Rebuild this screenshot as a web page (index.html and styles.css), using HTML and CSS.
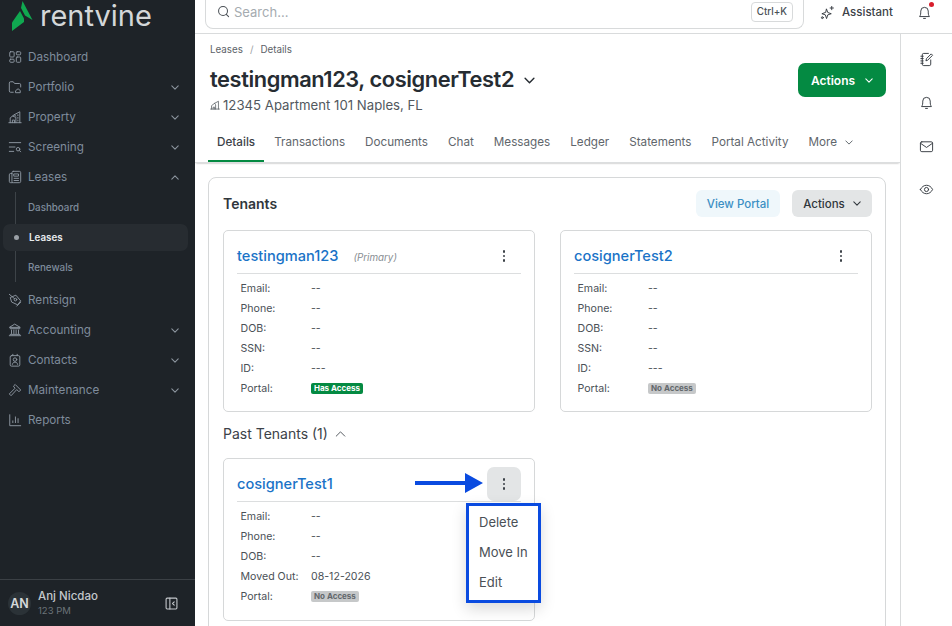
FILE: index.html
```html
<!DOCTYPE html>
<html lang="en">
<head>
    <meta charset="UTF-8">
    <title>Lease Details</title>
    <link rel="stylesheet" href="styles.css">
</head>
<body>
<div class="app">
    <aside class="sidebar">
        <div class="logo">
            <svg width="22" height="31" viewBox="0 0 22 31"><path d="M10.500 1 20.500 20 13 15.500 9 8z" fill="#10a850"/><path d="M8 11 12 18.500 12 22 0 31 0 22.500z" fill="#10a850"/></svg>
            <span class="logo-text">rentvine</span>
        </div>
        <nav class="nav">
            <div class="nav-item"><svg class="nav-icon" viewBox="0 0 16 16"><rect x="2" y="2" width="5" height="6" rx="1"/><rect x="9.500" y="2" width="5" height="3.500" rx="1"/><rect x="2" y="10.500" width="5" height="3.500" rx="1"/><rect x="9.500" y="8" width="5" height="6" rx="1"/></svg><span>Dashboard</span></div>
            <div class="nav-item"><svg class="nav-icon" viewBox="0 0 16 16"><path d="M6 14H3a1.500 1.500 0 0 1-1.500-1.500v-9A1.500 1.500 0 0 1 3 2h3l1.500 2H13a1.500 1.500 0 0 1 1.500 1.500V8"/><path d="M9 12l2.500-2 2.500 2v2.500H9z"/></svg><span>Portfolio</span><svg class="chev" viewBox="0 0 10 6"><path d="M1 1l4 4 4-4"/></svg></div>
            <div class="nav-item"><svg class="nav-icon" viewBox="0 0 16 16"><path d="M1 14.500h14M2.500 14.500V9L7 5.500l2 1.500M13.500 14.500V2L7 5.500M9 14.500V8.500L5.500 7M5 14.500v-3h2.500v3M11.300 5.500v1M11.300 8.500v1M11.300 11.500v1"/></svg><span>Property</span><svg class="chev" viewBox="0 0 10 6"><path d="M1 1l4 4 4-4"/></svg></div>
            <div class="nav-item"><svg class="nav-icon" viewBox="0 0 16 16"><path d="M1.500 3h13M1.500 8h6.500M1.500 13h5"/><circle cx="11.500" cy="10.500" r="2"/><path d="M13 12l1.500 1.500"/></svg><span>Screening</span><svg class="chev" viewBox="0 0 10 6"><path d="M1 1l4 4 4-4"/></svg></div>
            <div class="nav-item"><svg class="nav-icon" viewBox="0 0 16 16"><rect x="4.500" y="1.500" width="10" height="13" rx="1.500"/><path d="M4.500 4H3a1.500 1.500 0 0 0-1.500 1.500V13A1.500 1.500 0 0 0 3 14.500h2M7 4.500h5V7H7zM7 9.500h5M7 12h5"/></svg><span>Leases</span><svg class="chev" viewBox="0 0 10 6"><path d="M1 5l4-4 4 4"/></svg></div>
            <div class="subnav">
                <div class="sub-item">Dashboard</div>
                <div class="sub-item active">Leases</div>
                <div class="sub-item">Renewals</div>
            </div>
            <div class="nav-item nav-after"><svg class="nav-icon" viewBox="0 0 16 16"><path d="M3 5 9 2.500 14.500 9 11 13.500 4.500 10.500z"/><circle cx="8.500" cy="7.500" r="1.500"/><path d="M1.500 1.500 7.500 6.500M10 15l4.500-4.500"/></svg><span>Rentsign</span></div>
            <div class="nav-item"><svg class="nav-icon" viewBox="0 0 16 16"><path d="M8 1.500 14 5H2zM2.500 6.500h11M4 8v4M6.700 8v4M9.300 8v4M12 8v4M2.500 13h11M1.500 14.500h13"/></svg><span>Accounting</span><svg class="chev" viewBox="0 0 10 6"><path d="M1 1l4 4 4-4"/></svg></div>
            <div class="nav-item"><svg class="nav-icon" viewBox="0 0 16 16"><rect x="2.500" y="3" width="11" height="12" rx="1.500"/><path d="M5.500 1.500V3M10.500 1.500V3"/><circle cx="8" cy="7.500" r="2"/><path d="M5 13c.4-2 1.500-2.500 3-2.500s2.600.5 3 2.500"/></svg><span>Contacts</span><svg class="chev" viewBox="0 0 10 6"><path d="M1 1l4 4 4-4"/></svg></div>
            <div class="nav-item"><svg class="nav-icon" viewBox="0 0 16 16"><path d="M8.500 2 14.500 8 12.500 10 10 7.500 3.500 14.500 1.500 12.500 8 6 6.500 4z"/></svg><span>Maintenance</span><svg class="chev" viewBox="0 0 10 6"><path d="M1 1l4 4 4-4"/></svg></div>
            <div class="nav-item"><svg class="nav-icon" viewBox="0 0 16 16"><path d="M2 2v12.500h12.500M5.500 11V9M8.500 11V4.500M11.500 11V6.500"/></svg><span>Reports</span></div>
        </nav>
        <div class="user">
            <div class="avatar">AN</div>
            <div class="user-info">
                <div class="user-name">Anj Nicdao</div>
                <div class="user-org">123 PM</div>
            </div>
            <svg class="collapse" viewBox="0 0 12 12"><rect x="1" y="1" width="10" height="10" rx="1"/><path d="M4.500 1v10M8.500 4.500 7 6l1.500 1.500"/></svg>
        </div>
    </aside>

    <div class="main">
        <header class="topbar">
            <div class="search">
                <svg class="search-icon" viewBox="0 0 14 14"><circle cx="6.500" cy="6.500" r="4.800"/><path d="M10 10l2.500 2.500"/></svg>
                <span class="search-text">Search...</span>
                <span class="kbd">Ctrl+K</span>
            </div>
            <div class="assistant">
                <svg class="top-icon" viewBox="0 0 16 16"><path d="M7 4.500 8.300 8 12 9.300 8.300 10.500 7 14.500 5.700 10.500 2 9.300 5.700 8z"/><path d="M12.500 1.500v3.500M10.800 3.200h3.500"/><circle cx="2.500" cy="13.500" r="1"/></svg>
                <span>Assistant</span>
            </div>
            <div class="top-bell">
                <svg class="top-icon" viewBox="0 0 16 16"><path d="M3 12c1-1.500 1-2.500 1-5.500a4 4 0 0 1 8 0c0 3 0 4 1 5.500zM7 14.300h2"/></svg>
                <span class="dot"></span>
            </div>
        </header>

        <div class="body">
            <div class="content">
                <div class="page-head">
                    <div class="crumbs"><span>Leases</span><span class="crumb-sep">/</span><span>Details</span></div>
                    <div class="title-row">
                        <div>
                            <h1 class="title">testingman123, cosignerTest2 <svg class="title-chev" viewBox="0 0 10 6"><path d="M1 1l4 4 4-4"/></svg></h1>
                            <div class="address"><svg class="addr-icon" viewBox="0 0 16 16"><path d="M1 14.500h14M2.500 14.500V9L7 5.500l2 1.500M13.500 14.500V2L7 5.500M9 14.500V8.500M5 14.500v-3h2.500v3"/></svg>12345 Apartment 101 Naples, FL</div>
                        </div>
                        <button class="btn-green">Actions <svg class="btn-chev" viewBox="0 0 10 6"><path d="M1 1l4 4 4-4"/></svg></button>
                    </div>
                </div>
                <div class="tabs">
                    <div class="tab active">Details</div>
                    <div class="tab">Transactions</div>
                    <div class="tab">Documents</div>
                    <div class="tab">Chat</div>
                    <div class="tab">Messages</div>
                    <div class="tab">Ledger</div>
                    <div class="tab">Statements</div>
                    <div class="tab">Portal Activity</div>
                    <div class="tab">More <svg class="tab-chev" viewBox="0 0 10 6"><path d="M1 1l4 4 4-4"/></svg></div>
                </div>

                <section class="panel">
                    <div class="panel-head">
                        <h2 class="panel-title">Tenants</h2>
                        <button class="btn-light">View Portal</button>
                        <button class="btn-grey">Actions <svg class="btn-chev" viewBox="0 0 10 6"><path d="M1 1l4 4 4-4"/></svg></button>
                    </div>
                    <div class="tenant-grid">
                        <div class="tenant">
                            <div class="tenant-head">
                                <a class="tenant-name">testingman123</a><span class="primary">(Primary)</span>
                                <div class="kebab"><i></i><i></i><i></i></div>
                            </div>
                            <dl class="fields">
                                <dt>Email:</dt><dd>--</dd>
                                <dt>Phone:</dt><dd>--</dd>
                                <dt>DOB:</dt><dd>--</dd>
                                <dt>SSN:</dt><dd>--</dd>
                                <dt>ID:</dt><dd>---</dd>
                                <dt>Portal:</dt><dd><span class="badge badge-green">Has Access</span></dd>
                            </dl>
                        </div>
                        <div class="tenant">
                            <div class="tenant-head">
                                <a class="tenant-name">cosignerTest2</a>
                                <div class="kebab"><i></i><i></i><i></i></div>
                            </div>
                            <dl class="fields">
                                <dt>Email:</dt><dd>--</dd>
                                <dt>Phone:</dt><dd>--</dd>
                                <dt>DOB:</dt><dd>--</dd>
                                <dt>SSN:</dt><dd>--</dd>
                                <dt>ID:</dt><dd>---</dd>
                                <dt>Portal:</dt><dd><span class="badge badge-grey">No Access</span></dd>
                            </dl>
                        </div>
                    </div>
                    <div class="past-head">Past Tenants (1) <svg class="past-chev" viewBox="0 0 12 7"><path d="M1 6l5-5 5 5"/></svg></div>
                    <div class="tenant-grid">
                        <div class="tenant tenant-past">
                            <div class="tenant-head">
                                <a class="tenant-name">cosignerTest1</a>
                                <div class="kebab kebab-on"><i></i><i></i><i></i></div>
                            </div>
                            <dl class="fields">
                                <dt>Email:</dt><dd>--</dd>
                                <dt>Phone:</dt><dd>--</dd>
                                <dt>DOB:</dt><dd>--</dd>
                                <dt>Moved Out:</dt><dd>08-12-2026</dd>
                                <dt>Portal:</dt><dd><span class="badge badge-grey">No Access</span></dd>
                            </dl>
                            <svg class="arrow" viewBox="0 0 68 20"><path d="M0 8h50V0l18 10-18 10v-8H0z" fill="#0a4be0"/></svg>
                            <div class="menu">
                                <div>Delete</div>
                                <div>Move In</div>
                                <div>Edit</div>
                            </div>
                        </div>
                    </div>
                </section>
            </div>
            <div class="rail">
                <svg class="rail-icon" viewBox="0 0 16 16"><path d="M12.500 8.500V13a1.500 1.500 0 0 1-1.500 1.500H5A1.500 1.500 0 0 1 3.500 13V3A1.500 1.500 0 0 1 5 1.500h5"/><path d="M2 4.500h2.500M2 7h2.500M2 9.500h2.500M2 12h2.500M7.500 9l.5-2 5-5 1.500 1.500-5 5z"/></svg>
                <svg class="rail-icon" viewBox="0 0 16 16"><path d="M3 12c1-1.500 1-2.500 1-5.500a4 4 0 0 1 8 0c0 3 0 4 1 5.500zM7 14.300h2"/></svg>
                <svg class="rail-icon" viewBox="0 0 16 16"><rect x="1.500" y="3" width="13" height="10.500" rx="1.500"/><path d="M1.500 4.500 8 9l6.500-4.500"/></svg>
                <svg class="rail-icon" viewBox="0 0 16 16"><path d="M1.500 8C3 5 5.300 3.500 8 3.500S13 5 14.500 8C13 11 10.700 12.500 8 12.500S3 11 1.500 8z"/><circle cx="8" cy="8" r="2.200"/></svg>
            </div>
        </div>
    </div>
</div>
</body>
</html>
```

FILE: styles.css
```css
* {
    box-sizing: border-box;
}
html, body {
    margin: 0;
    height: 100%;
    overflow: hidden;
}
body {
    font-family: Inter, "Liberation Sans", sans-serif;
    background-color: white;
    color: #333a40;
}
svg {
    fill: none;
    stroke: currentColor;
    stroke-linecap: round;
    stroke-linejoin: round;
}
.app {
    display: flex;
    height: 626px;
}

/* sidebar */
.sidebar {
    width: 195px;
    flex: none;
    background-color: #1e2328;
    color: #7f8c9c;
    display: flex;
    flex-direction: column;
}
.logo {
    height: 42px;
    padding-left: 12px;
    display: flex;
    align-items: flex-start;
    gap: 6px;
}
.logo svg {
    stroke: none;
    flex: none;
}
.logo-text {
    font-size: 29px;
    line-height: 32px;
    color: #d4d7d9;
    font-weight: 400;
    letter-spacing: 0;
}
.nav {
    flex: 1;
}
.nav-item {
    height: 30px;
    display: flex;
    align-items: center;
    padding: 0 16px 0 8px;
    font-size: 11.700px;
}
.nav-item span {
    flex: 1;
    margin-left: 6px;
}
.nav-icon {
    width: 14px;
    height: 14px;
    stroke-width: 1.1;
    color: #8d96a0;
    flex: none;
}
.chev {
    width: 8px;
    height: 5px;
    stroke-width: 1.3;
    color: #8d96a0;
}
.subnav {
    margin-left: 15px;
    border-left: 1px solid #3d4348;
    height: 90px;
    position: relative;
}
.sub-item {
    height: 30px;
    display: flex;
    align-items: center;
    padding-left: 12px;
    font-size: 9.800px;
    font-weight: 500;
}
.sub-item.active {
    color: #e8ebee;
    font-weight: 600;
    background-color: #272c31;
    border-radius: 7px;
    height: 27px;
    margin: 2px 7px 1px -13px;
    padding-left: 26px;
    position: relative;
}
.sub-item.active::before {
    content: "";
    position: absolute;
    left: 11px;
    top: 11px;
    width: 5px;
    height: 5px;
    border-radius: 50%;
    background-color: #9aa0a6;
}
.nav-after {
    margin-top: 3px;
}
.user {
    height: 47px;
    border-top: 1px solid #3b4045;
    display: flex;
    align-items: center;
    padding: 0 17px 0 8px;
    gap: 7px;
}
.avatar {
    width: 23px;
    height: 23px;
    border-radius: 50%;
    background-color: #2b3237;
    color: #d5d8da;
    font-size: 12.500px;
    font-weight: 600;
    display: flex;
    align-items: center;
    justify-content: center;
    flex: none;
}
.user-info {
    flex: 1;
}
.user-name {
    font-size: 11.500px;
    color: #c4c8cc;
    font-weight: 500;
    line-height: 15px;
}
.user-org {
    font-size: 9.500px;
    color: #6c7379;
    line-height: 14px;
}
.collapse {
    width: 13px;
    height: 13px;
    color: #c4c8cc;
    stroke-width: 1;
}

/* top bar */
.main {
    flex: 1;
    display: flex;
    flex-direction: column;
    min-width: 0;
}
.topbar {
    height: 34px;
    flex: none;
    border-bottom: 1px solid #d9dbdc;
    display: flex;
    align-items: flex-start;
}
.search {
    margin-left: 10px;
    width: 599px;
    height: 29px;
    border: 1px solid #d8dadb;
    border-top: none;
    border-radius: 0 0 8px 8px;
    display: flex;
    align-items: center;
    padding: 0 10px 5px 11px;
}
.search-icon {
    width: 13px;
    height: 13px;
    color: #4a5056;
    stroke-width: 1.1;
}
.search-text {
    flex: 1;
    margin-left: 4px;
    font-size: 13px;
    color: #a5abb0;
}
.kbd {
    font-size: 9.800px;
    font-weight: 500;
    color: #4a5056;
    border: 1px solid #d8dadb;
    border-radius: 4px;
    padding: 3px 5px;
    line-height: 12px;
}
.assistant {
    margin-left: 16px;
    display: flex;
    align-items: center;
    gap: 7px;
    font-size: 11.500px;
    font-weight: 500;
    color: #3c4248;
    height: 24px;
    flex: none;
}
.top-icon {
    width: 15px;
    height: 15px;
    stroke-width: 1;
    color: #33393f;
    flex: none;
}
.top-bell {
    margin-left: 24px;
    position: relative;
    height: 24px;
    display: flex;
    align-items: center;
}
.dot {
    position: absolute;
    right: -2px;
    top: 2px;
    width: 5px;
    height: 5px;
    border-radius: 50%;
    background-color: #d81e2c;
}

/* page */
.body {
    flex: 1;
    display: flex;
    min-height: 0;
}
.content {
    flex: 1;
    min-width: 0;
    overflow: hidden;
}
.page-head {
    padding: 9px 14px 0 15px;
}
.crumbs {
    font-size: 9.800px;
    color: #5c6268;
    line-height: 13px;
    display: flex;
    gap: 7px;
}
.crumb-sep {
    color: #9ba0a5;
}
.title-row {
    margin-top: 7px;
    display: flex;
    justify-content: space-between;
    align-items: flex-start;
}
.title {
    margin: 0;
    font-size: 21.800px;
    line-height: 32px;
    font-weight: 600;
    color: #262c32;
    letter-spacing: -0.4px;
}
.title-chev {
    width: 11px;
    height: 7px;
    stroke-width: 1.3;
    margin-left: 5px;
    vertical-align: 3px;
}
.address {
    font-size: 13.200px;
    color: #52585e;
    line-height: 20px;
    display: flex;
    align-items: center;
    gap: 3px;
}
.addr-icon {
    width: 10px;
    height: 10px;
    stroke-width: 1.200;
}
.btn-green {
    width: 88px;
    height: 34px;
    border: none;
    border-radius: 7px;
    background-color: #048a42;
    color: white;
    font: 600 12px Inter, "Liberation Sans", sans-serif;
    display: flex;
    align-items: center;
    justify-content: center;
    gap: 10px;
}
.btn-chev {
    width: 8px;
    height: 5px;
    stroke-width: 1.3;
}
.tabs {
    margin-top: 13px;
    height: 35px;
    padding-left: 13px;
    display: flex;
    border-bottom: 1px solid #dcdedf;
    box-shadow: 0 1px 2px -1px #999;
}
.tab {
    padding: 0 10px;
    font-size: 11.700px;
    color: #5f666c;
    height: 34px;
    line-height: 28px;
    white-space: nowrap;
}
.tab.active {
    color: #3c4248;
    font-weight: 500;
    padding: 0 9px;
    border-bottom: 2px solid #048a42;
}
.tab-chev {
    width: 8px;
    height: 5px;
    stroke-width: 1.200;
    margin-left: 5px;
    vertical-align: 1px;
}
.panel {
    margin: 14px 14px 0 13px;
    border: 1px solid #d6d8d9;
    border-radius: 8px;
    padding: 12px 14px 0;
    height: 500px;
}
.panel-head {
    display: flex;
    align-items: center;
    gap: 12px;
    height: 27px;
    margin-right: -1px;
}
.panel-title {
    flex: 1;
    margin: 0;
    font-size: 14px;
    font-weight: 600;
    color: #30363c;
}
.btn-light, .btn-grey {
    height: 27px;
    border: none;
    border-radius: 6px;
    font: 500 11.500px Inter, "Liberation Sans", sans-serif;
    display: flex;
    align-items: center;
    justify-content: center;
}
.btn-light {
    width: 84px;
    background-color: #eff7fb;
    color: #3b8fc4;
}
.btn-grey {
    width: 80px;
    gap: 8px;
    background-color: #e3e5e6;
    color: #30363c;
}
.tenant-grid {
    margin-top: 13px;
    display: grid;
    grid-template-columns: 312px 312px;
    gap: 25px;
}
.tenant {
    height: 182px;
    border: 1px solid #d6d8d9;
    border-radius: 5px;
    padding: 8px 13px 0;
    position: relative;
}
.tenant-past {
    height: 163px;
}
.tenant-head {
    display: flex;
    align-items: center;
    height: 35px;
    border-bottom: 1px solid #dcdedf;
}
.tenant-name {
    font-size: 14.600px;
    font-weight: 500;
    color: #1a73c7;
}
.primary {
    margin-left: 15px;
    font-size: 9.800px;
    font-style: italic;
    color: #888e93;
    padding-top: 3px;
}
.kebab {
    margin-left: auto;
    width: 34px;
    height: 34px;
    border-radius: 7px;
    display: flex;
    flex-direction: column;
    align-items: center;
    justify-content: center;
    gap: 2px;
}
.kebab i {
    width: 2.500px;
    height: 2.500px;
    border-radius: 50%;
    background-color: #3c4248;
}
.kebab-on {
    background-color: #e3e5e6;
}
.fields {
    margin: 4px 0 0 3.500px;
    display: grid;
    grid-template-columns: 70.500px 1fr;
    grid-auto-rows: 20px;
    font-size: 10.600px;
    align-items: center;
}
.fields dt {
    color: #4a5056;
}
.fields dd {
    margin: 0;
    color: #4a5056;
}
.badge {
    display: inline-block;
    font-size: 8px;
    font-weight: 700;
    line-height: 11px;
    padding: 0 3px;
    border-radius: 2px;
    vertical-align: middle;
}
.badge-green {
    background-color: #048a42;
    color: white;
}
.badge-grey {
    background-color: #c6c8c9;
    color: #62676b;
}
.past-head {
    margin-top: 12px;
    height: 20px;
    font-size: 14px;
    line-height: 20px;
    color: #3c4248;
}
.past-head + .tenant-grid {
    margin-top: 14px;
}
.past-chev {
    width: 11px;
    height: 6px;
    stroke-width: 1;
    margin-left: 3px;
    vertical-align: 2px;
}

/* arrow and open menu sit over the card */
.arrow {
    position: absolute;
    left: 191px;
    top: 14px;
    width: 68px;
    height: 20px;
    stroke: none;
}
.menu {
    position: absolute;
    left: 242px;
    top: 44px;
    width: 75px;
    height: 100px;
    background-color: white;
    border: 3px solid #0a4be0;
    box-shadow: 0 6px 14px rgba(0,0,0,0.15);
    padding-top: 1px;
    font-size: 13px;
    color: #4a5056;
}
.menu div {
    height: 30px;
    line-height: 30px;
    padding-left: 10px;
    white-space: nowrap;
}

/* right icon rail */
.rail {
    width: 52px;
    flex: none;
    border-left: 1px solid #d9dbdc;
    display: flex;
    flex-direction: column;
    align-items: center;
    gap: 28.300px;
    padding-top: 18px;
}
.rail-icon {
    width: 15px;
    height: 15px;
    stroke-width: 1;
    color: #33393f;
}
```
